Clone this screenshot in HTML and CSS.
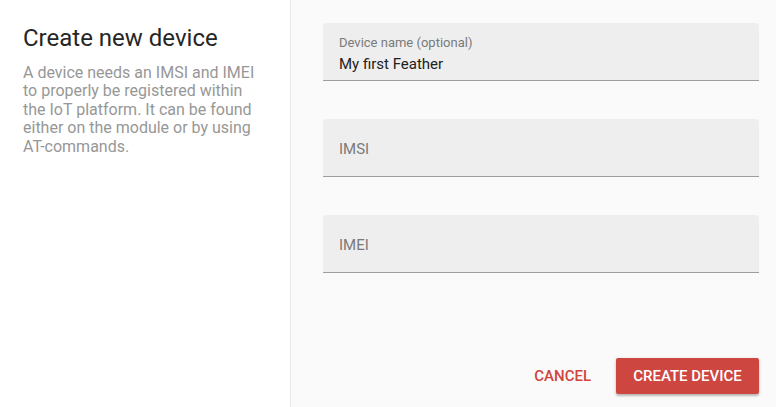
FILE: index.html
```html
<!DOCTYPE html>
<html>
<head>
<meta charset="utf-8">
<link rel="stylesheet" href="styles.css">
</head>
<body>
<div class="dialog">
  <aside class="intro">
    <h1 class="title">Create new device</h1>
    <p class="desc">A device needs an IMSI and IMEI to properly be registered within the IoT platform. It can be found either on the module or by using AT-commands.</p>
  </aside>
  <main class="form">
    <div class="fields">
      <label class="field filled">
        <span class="label">Device name (optional)</span>
        <span class="value">My first Feather</span>
      </label>
      <label class="field">
        <span class="placeholder">IMSI</span>
      </label>
      <label class="field">
        <span class="placeholder">IMEI</span>
      </label>
    </div>
    <div class="actions">
      <button class="btn btn-text">Cancel</button>
      <button class="btn btn-raised">Create device</button>
    </div>
  </main>
</div>
</body>
</html>
```
FILE: styles.css
```css
* { box-sizing: border-box; }
html, body { margin: 0; padding: 0; height: 100%; }
body {
  font-family: Roboto, "Noto Sans", sans-serif;
  background: #ffffff;
}
.dialog {
  display: flex;
  width: 776px;
  height: 407px;
}
.intro {
  width: 291px;
  flex: none;
  padding: 24px 0 0 23px;
  border-right: 1px solid #e8e8e8;
  background: #ffffff;
}
.title {
  margin: 0;
  font-size: 24px;
  font-weight: 400;
  line-height: 28px;
  color: #262626;
}
.desc {
  width: 238px;
  margin: 12px 0 0;
  font-size: 16px;
  line-height: 18.4px;
  color: #979797;
}
.form {
  flex: 1;
  background: #fafafa;
  padding: 23px 17px 13px 32px;
  display: flex;
  flex-direction: column;
  justify-content: space-between;
}
.fields {
  display: flex;
  flex-direction: column;
  gap: 38px;
}
.field {
  height: 58px;
  background: #eeeeee;
  border-radius: 4px 4px 0 0;
  border-bottom: 1px solid #9e9e9e;
  padding: 0 16px;
  display: flex;
  flex-direction: column;
  justify-content: center;
}
.field.filled {
  justify-content: flex-start;
  padding-top: 12px;
}
.label {
  font-size: 13px;
  line-height: 16px;
  color: #7a7a7a;
}
.value {
  margin-top: 2px;
  font-size: 15px;
  line-height: 22px;
  color: #212121;
}
.placeholder {
  font-size: 15px;
  line-height: 20px;
  color: #7a7a7a;
  padding-top: 2px;
}
.actions {
  display: flex;
  justify-content: flex-end;
  align-items: center;
  gap: 17px;
}
.btn {
  font-family: Roboto, "Noto Sans", sans-serif;
  font-size: 15px;
  font-weight: 500;
  text-transform: uppercase;
  letter-spacing: 0;
  border: none;
  cursor: pointer;
  height: 36px;
}
.btn-text {
  background: transparent;
  color: #d0443c;
  padding: 0 8px;
}
.btn-raised {
  background: #cd4640;
  color: #ffffff;
  border-radius: 2px;
  padding: 0;
  width: 143px;
  box-shadow: 0 2px 2px rgba(0,0,0,0.2), 0 1px 4px rgba(0,0,0,0.12);
}
```
